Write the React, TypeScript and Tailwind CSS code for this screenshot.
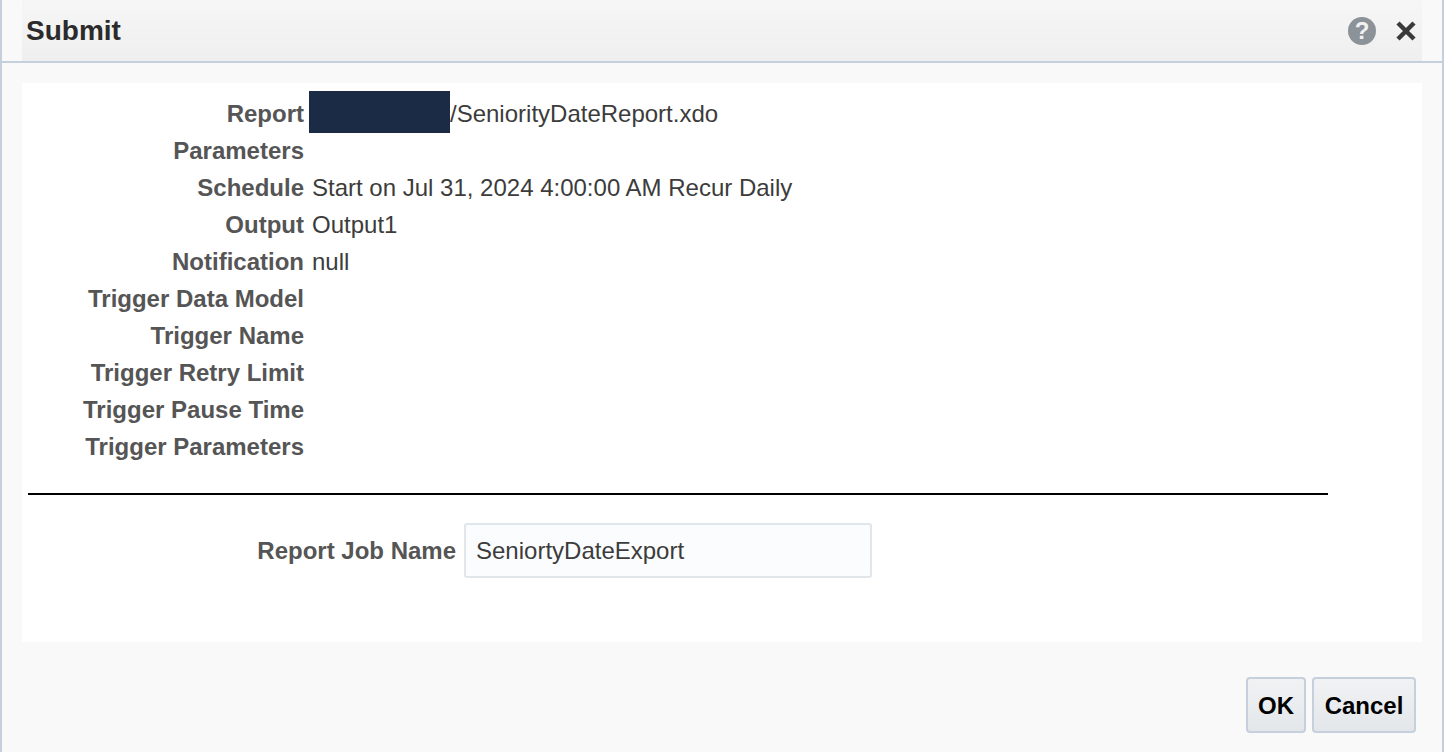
const font = { fontFamily: '"Liberation Sans", Arial, sans-serif' };

const rows: { label: string; value?: string }[] = [
  { label: "Report", value: "/SeniorityDateReport.xdo" },
  { label: "Parameters" },
  { label: "Schedule", value: "Start on Jul 31, 2024 4:00:00 AM Recur Daily" },
  { label: "Output", value: "Output1" },
  { label: "Notification", value: "null" },
  { label: "Trigger Data Model" },
  { label: "Trigger Name" },
  { label: "Trigger Retry Limit" },
  { label: "Trigger Pause Time" },
  { label: "Trigger Parameters" },
];

function HelpIcon() {
  return (
    <div className="flex h-7 w-7 items-center justify-center rounded-full bg-[#8b9298] text-[24px] leading-none font-bold text-[#f1f1f1]">
      ?
    </div>
  );
}

function CloseIcon() {
  return (
    <svg width="22" height="22" viewBox="0 0 22 22">
      <path d="M3 3 L19 19 M19 3 L3 19" stroke="#3a3a3a" strokeWidth="4.5" />
    </svg>
  );
}

function DialogButton({ children, width }: { children: string; width: string }) {
  return (
    <button
      className={`h-[56px] ${width} rounded-[4px] border-2 border-[#c5d0dc] bg-gradient-to-b from-[#f1f2f4] to-[#e3e7ea] pt-[2px] text-[24px] font-bold text-black`}
    >
      {children}
    </button>
  );
}

export default function App() {
  return (
    <div
      className="flex h-[752px] w-[1444px] flex-col overflow-hidden border-x-2 border-[#c5d0dc] bg-[#f9f9f9]"
      style={font}
    >
      {/* title bar */}
      <div className="border-b-2 border-[#c5d0dc] px-5">
        <div className="flex h-[61px] items-center justify-between bg-gradient-to-b from-[#f6f6f6] to-[#efefef] pr-[5px] pl-1">
          <div className="text-[28px] font-bold text-[#2b2b2b]">Submit</div>
          <div className="flex items-center gap-[19px]">
            <HelpIcon />
            <CloseIcon />
          </div>
        </div>
      </div>

      {/* content */}
      <div className="mx-5 mt-5 h-[559px] bg-white pt-[12px]">
        <div className="grid grid-cols-[282px_1fr] gap-x-2">
          {rows.map((r) => (
            <div key={r.label} className="contents">
              <div className="h-[37px] text-right text-[24px] leading-[37px] font-bold text-[#555555]">
                {r.label}
              </div>
              <div className="relative h-[37px] text-[24px] leading-[37px] text-[#3c3c3c]">
                {r.label === "Report" ? (
                  <>
                    <div className="absolute top-[-4px] left-[-3px] h-[42px] w-[141px] bg-[#1c2b45]" />
                    <span className="pl-[138px]">{r.value}</span>
                  </>
                ) : (
                  r.value
                )}
              </div>
            </div>
          ))}
        </div>

        <div className="mt-[28px] ml-[6px] h-[2px] w-[1300px] bg-black" />

        <div className="mt-[28px] flex items-center gap-2">
          <div className="w-[434px] text-right text-[24px] font-bold text-[#555555]">Report Job Name</div>
          <div className="flex h-[55px] w-[408px] items-center rounded-[3px] border-2 border-[#e0e6ea] bg-[#fbfcfe] pl-[10px] text-[24px] text-[#3c3c3c]">
            SeniortyDateExport
          </div>
        </div>
      </div>

      {/* buttons */}
      <div className="mt-[35px] flex justify-end gap-[6px] pr-[26px]">
        <DialogButton width="w-[60px]">OK</DialogButton>
        <DialogButton width="w-[104px]">Cancel</DialogButton>
      </div>
    </div>
  );
}
